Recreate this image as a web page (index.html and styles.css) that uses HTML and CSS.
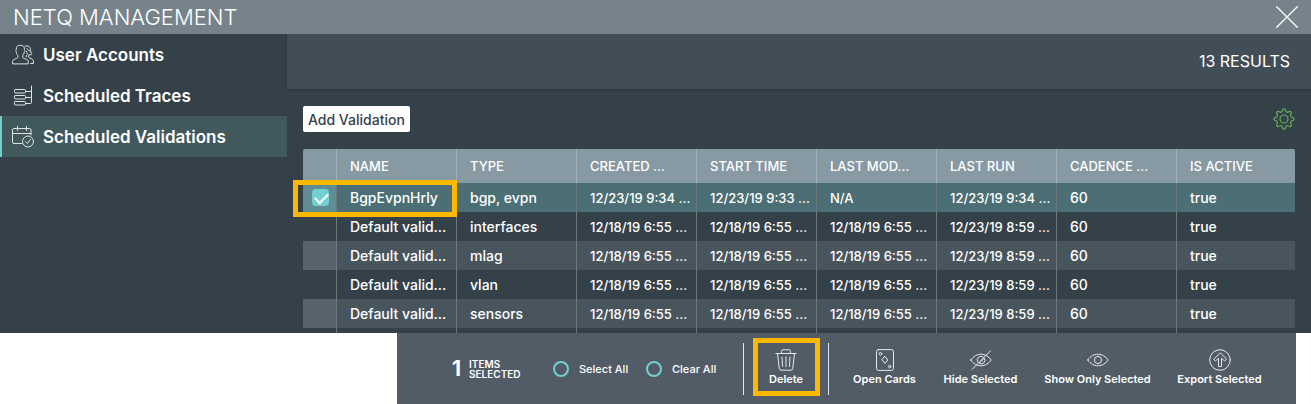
FILE: index.html
```html
<!DOCTYPE html>
<html lang="en">
<head>
<meta charset="utf-8">
<title>NetQ Management</title>
<link rel="stylesheet" href="styles.css">
</head>
<body>
<div class="panel">
  <header class="titlebar">
    <h1 class="title">NETQ MANAGEMENT</h1>
    <button class="close" type="button" aria-label="Close">
      <svg width="22" height="22" viewBox="0 0 22 22"><path d="M.7 .7 21.3 21.3M21.3 .7 .7 21.3"/></svg>
    </button>
  </header>
  <div class="layout">
    <nav class="sidebar">
      <a class="nav-item" href="#users">
        <svg class="nav-icon" width="22" height="22" viewBox="0 0 22 22"><path d="M.6 19.500v-2.200c0-1.300 1-1.800 2.600-2.300 1.800-.6 2.800-1 2.800-2v-1.400C4.800 10.300 4.400 9 4.300 7.800 3.700 7 3.800 6 4.300 5.500 4 2.600 5.500 1.300 8.300 1.300s4.500 1.400 4.100 4.300c.6.600.5 1.600-.1 2.200-.1 1.300-.6 2.600-1.600 3.700V13c0 1 1 1.400 2.800 2 1.600.5 2.700 1 2.700 2.300v2.200z"/><path d="M13 2.200c3.300-.9 5.400.4 5.400 3.200 0 1.800.6 3.500 1.600 4.400-.7.800-1.700 1.200-2.800 1.200M14.500 7.200c.3 1.900 1 3.200 2.100 4.100v1.600c0 .8.800 1.200 2.400 1.700 1.700.5 2.400 1.200 2.400 2.400v2.500h-2.700M15 4.700c.7 1.300 1.600 2 3 2.100M14.300 11.500v1.300"/></svg>
        <span>User Accounts</span>
      </a>
      <a class="nav-item" href="#traces">
        <svg class="nav-icon" width="22" height="22" viewBox="0 0 22 22"><rect x="2.500" y="4.500" width="11" height="3.500" rx=".8"/><rect x="2.500" y="10.500" width="11" height="3.500" rx=".8"/><rect x="2.500" y="16.500" width="11" height="3.500" rx=".8"/><path d="M19.500 1v16.500q0 1-1 1h-5M13.500 6.500h5q1 0 1-1M13.500 12.500h5q1 0 1-1"/></svg>
        <span>Scheduled Traces</span>
      </a>
      <a class="nav-item nav-item-active" href="#validations" aria-current="page">
        <svg class="nav-icon" width="22" height="22" viewBox="0 0 22 22"><path d="M10 17.500H2q-1.500 0-1.500-1.500V4Q.5 2.500 2 2.500h15.500Q19 2.500 19 4v5M.5 7.500H19M5.500.3v4.200M14.500.3v4.200"/><circle cx="16" cy="15.500" r="5.500"/><path d="m13.500 15.600 1.800 1.900 3.200-4"/></svg>
        <span>Scheduled Validations</span>
      </a>
    </nav>
    <main class="main">
      <div class="summary">13 RESULTS</div>
      <div class="content">
        <div class="toolbar">
          <button class="add" type="button">Add Validation</button>
          <button class="settings" type="button" aria-label="Table settings">
            <svg width="22" height="22" viewBox="0 0 22 22"><path d="M9 3.600C9.400 1.800 9.800.8 11 .8s1.600 1 2 2.800q.8.300 1.500.8c1.600-1 2.700-1.400 3.500-.6s.4 1.900-.6 3.500q.5.800.8 1.700c1.800.4 2.900.8 2.900 2s-1.100 1.600-2.900 2q-.3.900-.8 1.700c1 1.600 1.400 2.700.6 3.500s-1.900.4-3.500-.6q-.8.500-1.500.8c-.4 1.800-.8 2.800-2 2.800s-1.600-1-2-2.800q-.8-.3-1.500-.8c-1.600 1-2.700 1.400-3.500.6s-.4-1.900.6-3.500q-.5-.8-.8-1.700C2 12.600.9 12.200.9 11S2 9.400 3.800 9q.3-.9.800-1.700C3.600 5.700 3.200 4.600 4 3.800s1.900-.4 3.500.6Q8.200 3.900 9 3.600z"/><circle cx="11" cy="11" r="4"/></svg>
          </button>
        </div>
        <table class="grid">
          <colgroup><col class="col-check"><col class="col"><col class="col"><col class="col"><col class="col"><col class="col"><col class="col"><col class="col"><col></colgroup>
          <thead>
            <tr><th></th><th>NAME</th><th>TYPE</th><th>CREATED ...</th><th>START TIME</th><th>LAST MOD...</th><th>LAST RUN</th><th>CADENCE ...</th><th>IS ACTIVE</th></tr>
          </thead>
          <tbody>
            <tr class="selected"><td class="check-cell"><input class="check" type="checkbox" checked aria-label="Select BgpEvpnHrly"><span class="row-highlight"></span></td><td>BgpEvpnHrly</td><td>bgp, evpn</td><td class="date">12/23/19 9:34 ...</td><td class="date">12/23/19 9:33 ...</td><td class="date">N/A</td><td class="date">12/23/19 9:34 ...</td><td>60</td><td>true</td></tr>
            <tr><td></td><td>Default valid...</td><td>interfaces</td><td class="date">12/18/19 6:55 ...</td><td class="date">12/18/19 6:55 ...</td><td class="date">12/18/19 6:55 ...</td><td class="date">12/23/19 8:59 ...</td><td>60</td><td>true</td></tr>
            <tr class="alt"><td></td><td>Default valid...</td><td>mlag</td><td class="date">12/18/19 6:55 ...</td><td class="date">12/18/19 6:55 ...</td><td class="date">12/18/19 6:55 ...</td><td class="date">12/23/19 8:59 ...</td><td>60</td><td>true</td></tr>
            <tr><td></td><td>Default valid...</td><td>vlan</td><td class="date">12/18/19 6:55 ...</td><td class="date">12/18/19 6:55 ...</td><td class="date">12/18/19 6:55 ...</td><td class="date">12/23/19 8:59 ...</td><td>60</td><td>true</td></tr>
            <tr class="alt"><td></td><td>Default valid...</td><td>sensors</td><td class="date">12/18/19 6:55 ...</td><td class="date">12/18/19 6:55 ...</td><td class="date">12/18/19 6:55 ...</td><td class="date">12/23/19 8:59 ...</td><td>60</td><td>true</td></tr>
            <tr class="tail"><td></td><td></td><td></td><td></td><td></td><td></td><td></td><td></td><td></td></tr>
          </tbody>
        </table>
      </div>
    </main>
  </div>
</div>
<footer class="actions">
  <div class="count"><span class="count-number">1</span><span class="count-label">ITEMS<br>SELECTED</span></div>
  <label class="choice choice-all"><input class="ring" type="radio" name="selection"><span>Select All</span></label>
  <label class="choice choice-clear"><input class="ring" type="radio" name="selection"><span>Clear All</span></label>
  <div class="delete-slot">
    <button class="action delete" type="button">
      <svg width="22" height="22" viewBox="0 0 22 22"><path d="M.8 4.500h20.400M6.500 4.500V2.300Q6.500.8 8 .8h6q1.500 0 1.500 1.500v2.200M2.500 4.500l1.800 15.200q.2 1.500 1.700 1.500h10q1.500 0 1.700-1.500L19.500 4.500M7 8l.6 9.500M11 8v9.500M15 8l-.6 9.500"/></svg>
      <span>Delete</span>
    </button>
  </div>
  <div class="action-list">
    <button class="action open" type="button">
      <svg width="22" height="22" viewBox="0 0 22 22"><rect x="2.500" y=".6" width="17" height="20.800" rx="2"/><path d="m11 7.500 2.800 3.500-2.800 3.500L8.200 11z"/><circle cx="6.500" cy="4.800" r="1.300"/><circle cx="15.700" cy="17.600" r="1.300"/></svg>
      <span>Open Cards</span>
    </button>
    <button class="action hide" type="button">
      <svg width="22" height="22" viewBox="0 0 22 22"><path d="M.8 11C3.500 7.200 7 5.200 11 5.200s7.500 2 10.200 5.800c-2.700 3.800-6.200 5.800-10.200 5.800S3.500 14.800.8 11zM2 20.500 20.500 1.800M13.300 8.200a3.700 3.700 0 0 0-5.400 5M8.800 14a3.700 3.700 0 0 0 5.400-5M10 13.500l3.500-3.500"/></svg>
      <span>Hide Selected</span>
    </button>
    <button class="action show" type="button">
      <svg width="22" height="22" viewBox="0 0 22 22"><path d="M.8 11C3.500 7.200 7 5.200 11 5.200s7.500 2 10.200 5.800c-2.700 3.800-6.200 5.800-10.200 5.800S3.500 14.800.8 11z"/><circle cx="11" cy="11" r="3.600"/></svg>
      <span>Show Only Selected</span>
    </button>
    <button class="action export" type="button">
      <svg width="22" height="22" viewBox="0 0 22 22"><circle cx="11" cy="11" r="10.300"/><path d="M11 4.200 4.700 10.200l1.700 1.800L9.500 9.300v8.200h3V9.300l3.100 2.700 1.700-1.800z"/></svg>
      <span>Export Selected</span>
    </button>
  </div>
</footer>
</body>
</html>
```
FILE: styles.css
```css
* { box-sizing: border-box; }
body { margin: 0; background: #fff; color: #fff; font-family: Inter, "Liberation Sans", sans-serif; font-size: 14px; }
button { margin: 0; padding: 0; border: 0; background: none; color: inherit; font: inherit; }
svg { display: block; fill: none; stroke: currentColor; stroke-width: 1; stroke-linecap: round; stroke-linejoin: round; }

.panel { background: #354148; }
.titlebar { display: flex; align-items: center; justify-content: space-between; height: 34px; padding: 0 13px; background: #76838b; }
.title { margin: 0; font-size: 22px; line-height: 34px; font-weight: 300; }
.close svg { stroke-width: 1.3; }

.layout { display: flex; }
.sidebar { flex: none; width: 287px; }
.nav-item { display: flex; align-items: center; gap: 9px; height: 41px; padding-left: 12px; color: #fff; font-size: 17px; font-weight: 600; text-decoration: none; }
.nav-item-active { background: #41585d; border-left: 2px solid #74cfd2; padding-left: 10px; }
.nav-icon { color: #dfe3e5; }

.main { flex: 1; min-width: 0; }
.summary { height: 55px; padding-right: 21px; background: #424e57; box-shadow: 0 1px 2px #29333a; font-size: 16px; line-height: 55px; text-align: right; }
.content { padding: 17px 16px 0; }
.toolbar { display: flex; align-items: center; justify-content: space-between; height: 26px; margin-bottom: 17px; }
.add { height: 26px; padding: 0 5px; border-radius: 2px; background: #fff; color: #354148; font-weight: 500; }
.settings { color: #62ab5c; }
.settings svg { stroke-width: 1.2; }

.grid { width: 100%; table-layout: fixed; border-spacing: 0; font-size: 14px; font-weight: 500; }
.col-check { width: 34px; }
.col { width: 120px; }
.grid th, .grid td { height: 29px; padding: 0 0 0 13px; border-right: 1px solid #6d787e; text-align: left; white-space: nowrap; overflow: hidden; }
.grid th { height: 34px; background: #8799a3; border-color: #a2b0b8; font-size: 13px; font-weight: 500; }
.grid .date { font-size: 13px; }
.grid th:first-child { border-radius: 2px 0 0; }
.grid th:last-child { border-radius: 0 2px 0 0; }
.grid th:last-child, .grid td:last-child { border-right: 0; }
.grid .alt td { background: #49555d; }
.grid .alt td:first-child { background: #58646b; }
.grid .selected td { background: #4b6f74; }
.grid .selected .check-cell { position: relative; padding-left: 9px; background: #5f8d92; overflow: visible; }
.grid .tail td { height: 5px; }
.check { appearance: none; display: block; width: 17px; height: 17px; margin: 0; padding: 4px 0 0 3px; border-radius: 4px; background: #74cfd2; }
.check:checked::before { content: ""; display: block; width: 11px; height: 6px; border: solid #fff; border-width: 0 0 2px 2px; transform: rotate(-45deg); }
.row-highlight { position: absolute; left: -10px; top: -3px; z-index: 1; width: 164px; height: 37px; border: 5px solid #ffb800; pointer-events: none; }

.actions { display: flex; align-items: center; height: 71px; margin: 0 15px 0 397px; padding: 0 36px 0 55px; background: #515c66; font-size: 11px; font-weight: 600; white-space: nowrap; }
.count { display: flex; align-items: center; gap: 8px; flex: none; width: 101px; }
.count-number { font-size: 21px; font-weight: 700; }
.count-label { font-size: 10px; line-height: 10px; }
.choice { display: flex; align-items: center; gap: 10px; width: 93px; font-weight: 500; }
.ring { appearance: none; width: 16px; height: 16px; margin: 0; border: 2px solid #74cfd2; border-radius: 50%; }
.choice-clear { width: 97px; }
.delete-slot { display: flex; align-items: center; justify-content: center; width: 86px; height: 52px; padding-bottom: 4px; border: solid #e3e6e8; border-width: 0 1px; }
.action { display: flex; flex-direction: column; align-items: center; line-height: 16px; font-weight: 600; }
.action svg { color: #e6e9eb; }
.delete { flex: none; justify-content: center; width: 67px; height: 58px; padding-top: 2px; border: 5px solid #ffb800; }
.action-list { display: flex; flex: 1; justify-content: flex-end; gap: 30px; padding-bottom: 2px; }
.open { width: 61px; }
.hide { width: 71px; }
.show { width: 103px; }
.export { width: 81px; }
```
